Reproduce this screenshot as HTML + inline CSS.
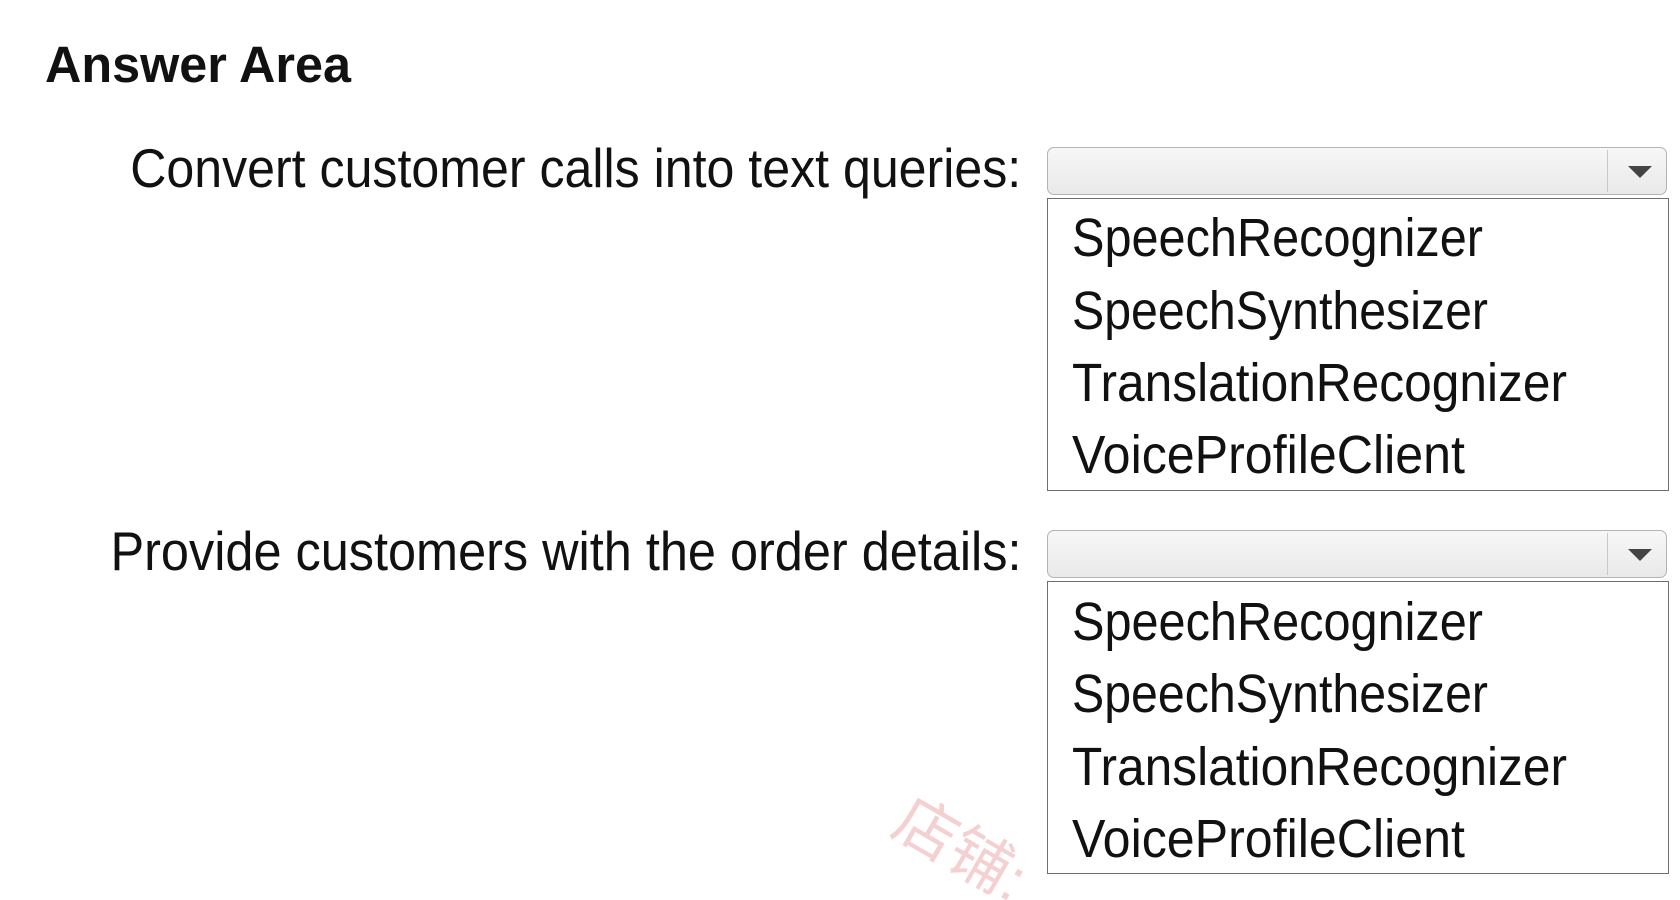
<!DOCTYPE html>
<html><head><meta charset="utf-8"><style>
html,body{margin:0;padding:0;background:#fff;width:1680px;height:900px;overflow:hidden;font-family:"Liberation Sans",sans-serif;color:#111}
#w{position:relative;width:1680px;height:900px;overflow:hidden}
.t{position:absolute;white-space:nowrap;line-height:1;transform-origin:0 0}
.r{transform-origin:100% 0}
.dd{position:absolute;left:1047px;width:620px;height:48px;border:1px solid #b4b4b4;border-radius:7px;background:linear-gradient(#f7f7f7,#e9e9e9);box-sizing:border-box}
.dd .sep{position:absolute;left:559px;top:2px;bottom:2px;width:1px;background:#c8c8c8}
.dd .arr{position:absolute;left:580px;top:18px;width:0;height:0;border-left:12px solid transparent;border-right:12px solid transparent;border-top:12px solid #444}
.lb{position:absolute;left:1047px;width:622px;height:293px;border:1px solid #6e6e6e;box-sizing:border-box;background:#fff}
.it{font-size:54px}
</style></head><body><div id="w">
<div class="t" data-w="306" style="left:45px;top:39px;font-size:51px;font-weight:bold">Answer Area</div>

<div class="t r" data-w="891" data-right="1021" style="top:141px;font-size:55px">Convert customer calls into text queries:</div>
<div class="dd" style="top:147px"><div class="sep"></div><div class="arr"></div></div>
<div class="lb" style="top:198px"></div>
<div class="t it" data-w="411" style="left:1072px;top:211px">SpeechRecognizer</div>
<div class="t it" data-w="416" style="left:1072px;top:284px">SpeechSynthesizer</div>
<div class="t it" data-w="495" style="left:1072px;top:356px">TranslationRecognizer</div>
<div class="t it" data-w="393" style="left:1072px;top:428px">VoiceProfileClient</div>

<div class="t r" data-w="911" data-right="1021" style="top:524px;font-size:55px">Provide customers with the order details:</div>
<div class="dd" style="top:530px"><div class="sep"></div><div class="arr"></div></div>
<div class="lb" style="top:581px"></div>
<div class="t it" data-w="411" style="left:1072px;top:595px">SpeechRecognizer</div>
<div class="t it" data-w="416" style="left:1072px;top:667px">SpeechSynthesizer</div>
<div class="t it" data-w="495" style="left:1072px;top:740px">TranslationRecognizer</div>
<div class="t it" data-w="393" style="left:1072px;top:812px">VoiceProfileClient</div>

<div style="position:absolute;left:925px;top:770px;font-family:'Liberation Sans','Noto Sans CJK SC',sans-serif;font-size:62px;color:rgba(230,150,150,0.45);transform:rotate(30deg);transform-origin:0 0;white-space:nowrap">店铺:</div>
</div>
<script>
document.querySelectorAll('[data-w]').forEach(function(e){
 var w=e.getBoundingClientRect().width, tw=+e.dataset.w, s=tw/w;
 if(e.dataset.right){e.style.left=(+e.dataset.right - w)+'px';}
 e.style.transform='scaleX('+s+')';
});
</script>
</body></html>
